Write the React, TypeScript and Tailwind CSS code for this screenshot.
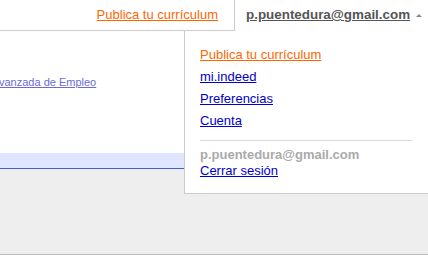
export default function App() {
  return (
    <div className="relative h-[261px] w-[428px] overflow-hidden bg-white font-['Liberation_Sans',Arial,sans-serif] text-[13px]">
      {/* Header */}
      <div className="flex h-[31px]">
        <div className="flex w-[235px] items-center justify-end border-r border-b border-[#ccc] pr-[16px] pb-[1px]">
          <a href="#" className="text-[#f60] underline">Publica tu currículum</a>
        </div>
        <div className="flex flex-1 items-center pl-[11px] pb-[1px]">
          <a href="#" className="text-[13.4px] font-bold text-[#555] underline">p.puentedura@gmail.com</a>
          <span className="ml-[6px] mt-[1px] h-0 w-0 border-x-[3px] border-b-[3px] border-x-transparent border-b-[#888]" />
        </div>
      </div>

      {/* Page body */}
      <div className="h-[122px] pt-[41px]">
        <a href="#" className="-ml-[1px] text-[11px] text-[#6b6bd6] underline">vanzada de Empleo</a>
      </div>
      <div className="h-[16px] border-b border-[#36c] bg-[#e0e6ff]" />
      <div className="h-[86px] border-b border-[#bbb] bg-[#eee]" />

      {/* Dropdown */}
      <div className="absolute top-[31px] right-0 left-[184px] flex h-[163px] flex-col border-b border-l border-[#ccc] bg-white pt-[13px] pl-[15px] pr-[15px]">
        <a href="#" className="leading-[22px] text-[#f60] underline">Publica tu currículum</a>
        <a href="#" className="leading-[22px] text-[#00c] underline">mi.indeed</a>
        <a href="#" className="leading-[22px] text-[#00c] underline">Preferencias</a>
        <a href="#" className="leading-[22px] text-[#00c] underline">Cuenta</a>
        <div className="mt-[8px] mb-[6px] h-px w-[213px] bg-[#ddd]" />
        <span className="leading-[16px] font-bold text-[#aaa]">p.puentedura@gmail.com</span>
        <a href="#" className="leading-[16px] text-[#00c] underline">Cerrar sesión</a>
      </div>
    </div>
  )
}
